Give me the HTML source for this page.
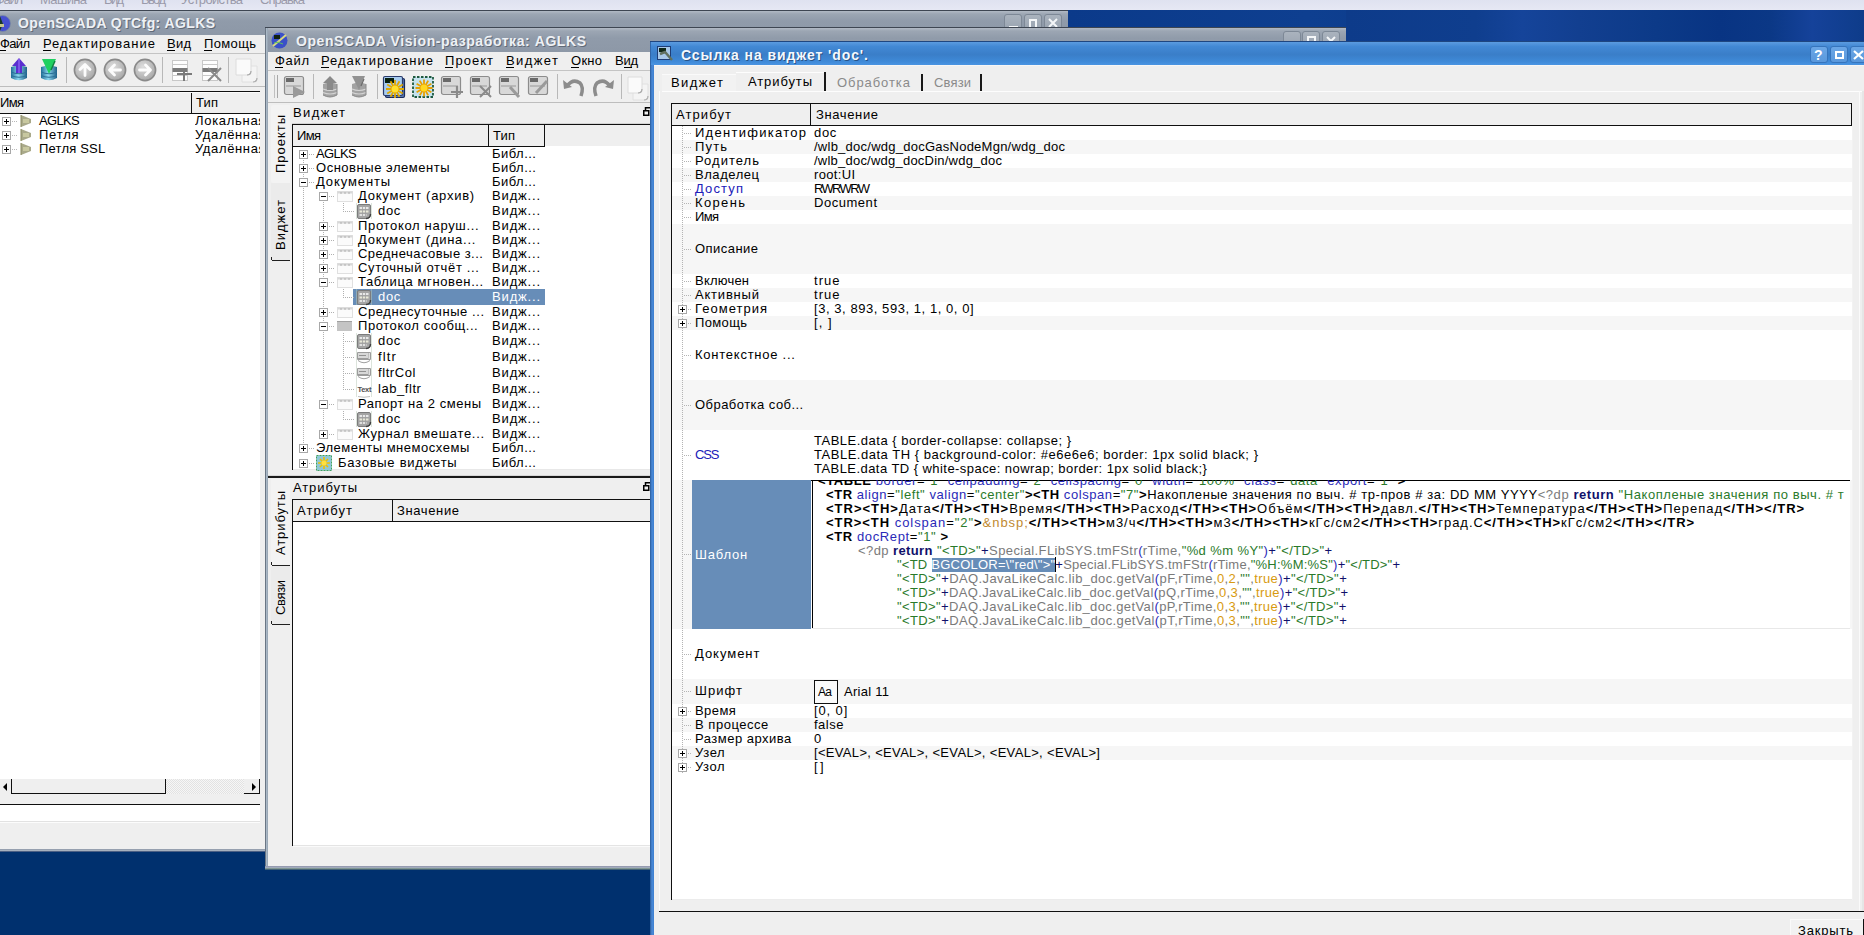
<!DOCTYPE html><html><head><meta charset="utf-8"><style>
html,body{margin:0;padding:0}
body{width:1864px;height:935px;overflow:hidden;position:relative;background:#00306e;font-family:"Liberation Sans",sans-serif;font-size:13px;color:#000}
body>div,div.a{position:absolute}
.t{position:absolute;white-space:pre;line-height:14px}
svg{position:absolute;overflow:visible}
</style></head><body>
<div style="left:0px;top:0px;width:1864px;height:935px;background:#00306e"></div>
<div style="left:1068px;top:10px;width:796px;height:32px;background:linear-gradient(90deg,#0b3a8a 0%,#0e3f90 30%,#0b3a88 60%,#073583 75%,#0b3a86 100%)"></div>
<div style="left:1346px;top:10px;width:518px;height:32px;background:linear-gradient(90deg,#0d3b8a 0%,#0f3e8e 25%,#15449a 34%,#123f90 45%,#0c3a88 60%,#083483 72%,#0b3886 82%,#15429a 90%,#0e3c8a 100%)"></div>
<div style="left:0px;top:0px;width:1864px;height:10px;background:linear-gradient(#dfe2f0,#e6e8f4)"></div>
<div class="t" style="left:-5px;top:-7px;font-size:13px;letter-spacing:-1.320px;color:#9a9aaa;">Файл</div>
<div class="t" style="left:40px;top:-7px;font-size:13px;letter-spacing:-0.661px;color:#9a9aaa;">Машина</div>
<div class="t" style="left:104px;top:-7px;font-size:13px;letter-spacing:-1.759px;color:#9a9aaa;">Вид</div>
<div class="t" style="left:141px;top:-7px;font-size:13px;letter-spacing:-1.654px;color:#9a9aaa;">Ввод</div>
<div class="t" style="left:181px;top:-7px;font-size:13px;letter-spacing:-0.668px;color:#9a9aaa;">Устройства</div>
<div class="t" style="left:260px;top:-7px;font-size:13px;letter-spacing:-1.000px;color:#9a9aaa;">Справка</div>
<div style="left:0px;top:10px;width:1068px;height:841px;background:#efefef"></div>
<div style="left:0px;top:10px;width:1068px;height:1px;background:#3e4652"></div>
<div style="left:0px;top:11px;width:1068px;height:24px;background:linear-gradient(#b2bac5 0px,#9ca6b3 3px,#909baa 10px,#8d98a7)"></div>
<svg style="left:-6px;top:15px" width="17" height="17" viewBox="0 0 17 17"><circle cx="8.5" cy="8.5" r="8" fill="#4650d0"/><path d="M0.5 8.5 A8 8 0 0 1 6 1 L9 9 L6 16 A8 8 0 0 1 0.5 8.5 Z" fill="#1a3a28"/><rect x="2" y="9" width="8" height="3" fill="#c8c890"/><circle cx="8.5" cy="8.5" r="8" fill="none" stroke="#7a8aa0" stroke-width=".8"/></svg>
<div class="t" style="left:19px;top:17px;font-size:14px;letter-spacing:0.394px;color:#3c4450;font-weight:bold;opacity:.55;">OpenSCADA QTCfg: AGLKS</div>
<div class="t" style="left:18px;top:16px;font-size:14px;letter-spacing:0.394px;color:#eef1f5;font-weight:bold;">OpenSCADA QTCfg: AGLKS</div>
<div style="left:1004px;top:14px;width:18px;height:16px;border:1px solid #7d8896;border-radius:3px;box-sizing:border-box;background:linear-gradient(#aab3be,#9aa4b1)"></div>
<div style="left:1024px;top:14px;width:18px;height:16px;border:1px solid #7d8896;border-radius:3px;box-sizing:border-box;background:linear-gradient(#aab3be,#9aa4b1)"></div>
<div style="left:1044px;top:14px;width:18px;height:16px;border:1px solid #7d8896;border-radius:3px;box-sizing:border-box;background:linear-gradient(#aab3be,#9aa4b1)"></div>
<div style="left:1009px;top:26px;width:9px;height:2px;background:#f4f6f8"></div>
<div style="left:1029px;top:19px;width:8px;height:9px;border:2px solid #f4f6f8;border-bottom:none;box-sizing:border-box"></div>
<svg style="left:1048px;top:18px" width="10" height="10"><path d="M1 1 L9 9 M9 1 L1 9" stroke="#f4f6f8" stroke-width="2"/></svg>
<div style="left:0px;top:35px;width:1068px;height:18px;background:#efefef"></div>
<div class="t" style="left:0px;top:37px;font-size:13px;letter-spacing:-0.654px;">Файл</div>
<div style="left:0px;top:50px;width:6px;height:1px;background:#000"></div>
<div class="t" style="left:43px;top:37px;font-size:13px;letter-spacing:0.997px;">Редактирование</div>
<div style="left:43px;top:50px;width:8px;height:1px;background:#000"></div>
<div class="t" style="left:167px;top:37px;font-size:13px;letter-spacing:0.241px;">Вид</div>
<div style="left:167px;top:50px;width:8px;height:1px;background:#000"></div>
<div class="t" style="left:204px;top:37px;font-size:13px;letter-spacing:0.358px;">Помощь</div>
<div style="left:204px;top:50px;width:8px;height:1px;background:#000"></div>
<div style="left:0px;top:53px;width:1068px;height:1px;background:#c4c4c4"></div>
<div style="left:0px;top:86px;width:1068px;height:1px;background:#bdbdbd"></div>
<svg style="left:10px;top:58px" width="18" height="24" viewBox="0 0 18 24"><defs><linearGradient id="dbg" x1="0" x2="1"><stop offset="0" stop-color="#1f6f98"/><stop offset=".45" stop-color="#8fd8f0"/><stop offset="1" stop-color="#1d5f88"/></linearGradient></defs><path d="M1 9 Q9 6 17 9 L17 20 Q9 24.5 1 20 Z" fill="url(#dbg)"/><path d="M1 14 Q9 17.5 17 14 M1 17.5 Q9 21 17 17.5" stroke="#2a6f98" fill="none" stroke-width="1"/><path d="M9 0 L16 8 L12 8 L12 15 L6 15 L6 8 L2 8 Z" fill="#5a2ed0"/><path d="M9 1 L9 15" stroke="#8a60f0" stroke-width="1.5"/></svg>
<svg style="left:40px;top:58px" width="18" height="24" viewBox="0 0 18 24"><defs><linearGradient id="dbg" x1="0" x2="1"><stop offset="0" stop-color="#1f6f98"/><stop offset=".45" stop-color="#8fd8f0"/><stop offset="1" stop-color="#1d5f88"/></linearGradient></defs><path d="M1 9 Q9 6 17 9 L17 20 Q9 24.5 1 20 Z" fill="url(#dbg)"/><path d="M1 14 Q9 17.5 17 14 M1 17.5 Q9 21 17 17.5" stroke="#2a6f98" fill="none" stroke-width="1"/><path d="M2 1 L16 1 L9 16 Z" fill="#20d060"/><path d="M11 12 L15 3" stroke="#108040" stroke-width="1.5"/></svg>
<div style="left:66px;top:57px;width:1px;height:26px;background:#b8b8b8"></div>
<svg style="left:73px;top:58px" width="24" height="24" viewBox="0 0 24 24"><defs><radialGradient id="cg" cx=".4" cy=".35" r=".7"><stop offset="0" stop-color="#dedede"/><stop offset="1" stop-color="#a6a6a6"/></radialGradient></defs><circle cx="12" cy="12" r="10.6" fill="url(#cg)" stroke="#8a8a8a" stroke-width="1.6"/><path d="M12 17.5 L12 7 M7 11.5 L12 6.5 L17 11.5" stroke="#fcfcfc" stroke-width="2.8" fill="none" stroke-linecap="round" stroke-linejoin="round"/></svg>
<svg style="left:103px;top:58px" width="24" height="24" viewBox="0 0 24 24"><defs><radialGradient id="cg" cx=".4" cy=".35" r=".7"><stop offset="0" stop-color="#dedede"/><stop offset="1" stop-color="#a6a6a6"/></radialGradient></defs><circle cx="12" cy="12" r="10.6" fill="url(#cg)" stroke="#8a8a8a" stroke-width="1.6"/><path d="M17.5 12 L7 12 M11.5 7 L6.5 12 L11.5 17" stroke="#fcfcfc" stroke-width="2.8" fill="none" stroke-linecap="round" stroke-linejoin="round"/></svg>
<svg style="left:133px;top:58px" width="24" height="24" viewBox="0 0 24 24"><defs><radialGradient id="cg" cx=".4" cy=".35" r=".7"><stop offset="0" stop-color="#dedede"/><stop offset="1" stop-color="#a6a6a6"/></radialGradient></defs><circle cx="12" cy="12" r="10.6" fill="url(#cg)" stroke="#8a8a8a" stroke-width="1.6"/><path d="M6.5 12 L17 12 M12.5 7 L17.5 12 L12.5 17" stroke="#fcfcfc" stroke-width="2.8" fill="none" stroke-linecap="round" stroke-linejoin="round"/></svg>
<div style="left:162px;top:57px;width:1px;height:26px;background:#b8b8b8"></div>
<svg style="left:172px;top:60px" width="22" height="22" viewBox="0 0 22 22"><rect x="0.5" y="0.5" width="15" height="20" fill="#fdfdfd" stroke="#c8c8c8"/><rect x="0.5" y="4" width="15" height="1" fill="#c8c8c8"/><rect x="0.5" y="8" width="15" height="4" fill="#7a7a7a"/><rect x="0.5" y="15" width="15" height="1" fill="#c8c8c8"/><path d="M12 9 L12 21 M5 14 L20 14" stroke="#7a7a7a" stroke-width="2"/></svg>
<svg style="left:202px;top:60px" width="22" height="22" viewBox="0 0 22 22"><rect x="0.5" y="0.5" width="15" height="20" fill="#fdfdfd" stroke="#c8c8c8"/><rect x="0.5" y="4" width="15" height="1" fill="#c8c8c8"/><rect x="0.5" y="8" width="15" height="4" fill="#7a7a7a"/><rect x="0.5" y="15" width="15" height="1" fill="#c8c8c8"/><path d="M6 8 L19 21 M19 8 L6 21" stroke="#8a8a8a" stroke-width="2"/></svg>
<div style="left:228px;top:57px;width:1px;height:26px;background:#b8b8b8"></div>
<svg style="left:235px;top:58px" width="24" height="26" viewBox="0 0 24 26"><path d="M7 8 L22 8 L22 20 Q22 24 18 24 L7 24 Z" fill="#f4f4f4" stroke="#e0e0e0"/><path d="M18 24 Q22 24 22 20" stroke="#b0b0b0" fill="none" stroke-width="1.2"/><path d="M1 1 L16 1 L16 13 Q16 17 12 17 L1 17 Z" fill="#fafafa" stroke="#dcdcdc"/><path d="M12 17 Q16 17 16 13" stroke="#a8a8a8" fill="none" stroke-width="1.2"/></svg>
<div style="left:0px;top:92px;width:260px;height:21px;background:#efefef"></div>
<div style="left:0px;top:91px;width:260px;height:1px;background:#101010"></div>
<div style="left:0px;top:92px;width:260px;height:1px;background:#fcfcfc"></div>
<div style="left:0px;top:113px;width:260px;height:1px;background:#101010"></div>
<div style="left:191px;top:93px;width:1px;height:20px;background:#101010"></div>
<div class="t" style="left:0px;top:96px;font-size:13px;letter-spacing:-0.660px;">Имя</div>
<div class="t" style="left:196px;top:96px;font-size:13px;letter-spacing:0.164px;">Тип</div>
<div style="left:0px;top:114px;width:260px;height:665px;background:#fff"></div>
<div style="left:260px;top:91px;width:5px;height:760px;background:#efefef"></div>
<div style="left:2px;top:117px;width:9px;height:9px;border:1px solid #a8a8a8;box-sizing:border-box;background:#fff"></div>
<div style="left:4px;top:121px;width:5px;height:1px;background:#000"></div>
<div style="left:6px;top:119px;width:1px;height:5px;background:#000"></div>
<svg style="left:19px;top:114px" width="14" height="14" viewBox="0 0 14 14"><path d="M2 1 L12 5 L12 9 L2 13 Z" fill="#a9a98a"/><path d="M2 1 L2 13" stroke="#8a8a60"/><rect x="4" y="5" width="6" height="4" fill="#c8c8a0"/></svg>
<div style="left:12px;top:121px;width:6px;height:1px;background:repeating-linear-gradient(90deg,#b8b8b8 0 1px,transparent 1px 2px)"></div>
<div class="t" style="left:39px;top:114px;font-size:13px;letter-spacing:-0.643px;">AGLKS</div>
<div class="t" style="left:195px;top:114px;width:65px;overflow:hidden;letter-spacing:0.703px">Локальная</div>
<div style="left:2px;top:131px;width:9px;height:9px;border:1px solid #a8a8a8;box-sizing:border-box;background:#fff"></div>
<div style="left:4px;top:135px;width:5px;height:1px;background:#000"></div>
<div style="left:6px;top:133px;width:1px;height:5px;background:#000"></div>
<svg style="left:19px;top:128px" width="14" height="14" viewBox="0 0 14 14"><path d="M2 1 L12 5 L12 9 L2 13 Z" fill="#a9a98a"/><path d="M2 1 L2 13" stroke="#8a8a60"/><rect x="4" y="5" width="6" height="4" fill="#c8c8a0"/></svg>
<div style="left:12px;top:135px;width:6px;height:1px;background:repeating-linear-gradient(90deg,#b8b8b8 0 1px,transparent 1px 2px)"></div>
<div class="t" style="left:39px;top:128px;font-size:13px;letter-spacing:0.781px;">Петля</div>
<div class="t" style="left:195px;top:128px;width:65px;overflow:hidden;letter-spacing:0.632px">Удалённая</div>
<div style="left:2px;top:145px;width:9px;height:9px;border:1px solid #a8a8a8;box-sizing:border-box;background:#fff"></div>
<div style="left:4px;top:149px;width:5px;height:1px;background:#000"></div>
<div style="left:6px;top:147px;width:1px;height:5px;background:#000"></div>
<svg style="left:19px;top:142px" width="14" height="14" viewBox="0 0 14 14"><path d="M2 1 L12 5 L12 9 L2 13 Z" fill="#a9a98a"/><path d="M2 1 L2 13" stroke="#8a8a60"/><rect x="4" y="5" width="6" height="4" fill="#c8c8a0"/></svg>
<div style="left:12px;top:149px;width:6px;height:1px;background:repeating-linear-gradient(90deg,#b8b8b8 0 1px,transparent 1px 2px)"></div>
<div class="t" style="left:39px;top:142px;font-size:13px;letter-spacing:0.191px;">Петля SSL</div>
<div class="t" style="left:195px;top:142px;width:65px;overflow:hidden;letter-spacing:0.632px">Удалённая</div>
<div style="left:0px;top:779px;width:260px;height:16px;background:#efefef"></div>
<div style="left:166px;top:779px;width:78px;height:15px;background:repeating-conic-gradient(#e2e2e2 0 25%,#f6f6f6 0 50%) 0 0/2px 2px"></div>
<div style="left:11px;top:779px;width:1px;height:15px;background:#101010"></div>
<div style="left:11px;top:793px;width:155px;height:1px;background:#101010"></div>
<div style="left:165px;top:779px;width:1px;height:15px;background:#101010"></div>
<div style="left:244px;top:793px;width:16px;height:1px;background:#101010"></div>
<div style="left:259px;top:779px;width:1px;height:15px;background:#101010"></div>
<svg style="left:1px;top:782px" width="8" height="10"><path d="M2 5 L6 1 L6 9 Z" fill="#000"/></svg>
<svg style="left:250px;top:782px" width="8" height="10"><path d="M6 5 L2 1 L2 9 Z" fill="#000"/></svg>
<div style="left:0px;top:795px;width:260px;height:9px;background:#efefef"></div>
<div style="left:0px;top:804px;width:260px;height:1px;background:#101010"></div>
<div style="left:0px;top:805px;width:260px;height:17px;background:#fff"></div>
<div style="left:0px;top:821px;width:260px;height:1px;background:#e2e2e2"></div>
<div style="left:0px;top:822px;width:260px;height:1px;background:#fcfcfc"></div>
<div style="left:0px;top:849px;width:265px;height:3px;background:linear-gradient(#8e98a8,#a6b0be 50%,#1e3868)"></div>
<div style="left:265px;top:27px;width:1081px;height:842px;background:#efefef"></div>
<div style="left:265px;top:27px;width:3px;height:842px;background:linear-gradient(90deg,#6a7684 0 1px,#aab8c6 1px 2px,#9aa8b6 2px 3px)"></div>
<div style="left:265px;top:27px;width:1081px;height:1px;background:#3e4652"></div>
<div style="left:268px;top:28px;width:1078px;height:24px;background:linear-gradient(#b2bac5 0px,#9ca6b3 3px,#909baa 10px,#8d98a7)"></div>
<svg style="left:271px;top:32px" width="17" height="17" viewBox="0 0 17 17"><circle cx="8.5" cy="8.5" r="8" fill="#3a50c8"/><rect x="3" y="3" width="6" height="4" fill="#102010"/><path d="M2 14 L15 3" stroke="#d8d880" stroke-width="2"/><path d="M3 11 Q7 9 12 12" stroke="#60c060" fill="none"/></svg>
<div class="t" style="left:297px;top:35px;font-size:14px;letter-spacing:0.569px;color:#3c4450;font-weight:bold;opacity:.55;">OpenSCADA Vision-разработка: AGLKS</div>
<div class="t" style="left:296px;top:34px;font-size:14px;letter-spacing:0.569px;color:#eef1f5;font-weight:bold;">OpenSCADA Vision-разработка: AGLKS</div>
<div style="left:1283px;top:31px;width:18px;height:16px;border:1px solid #7d8896;border-radius:3px;box-sizing:border-box;background:linear-gradient(#aab3be,#9aa4b1)"></div>
<div style="left:1302px;top:31px;width:18px;height:16px;border:1px solid #7d8896;border-radius:3px;box-sizing:border-box;background:linear-gradient(#aab3be,#9aa4b1)"></div>
<div style="left:1322px;top:31px;width:18px;height:16px;border:1px solid #7d8896;border-radius:3px;box-sizing:border-box;background:linear-gradient(#aab3be,#9aa4b1)"></div>
<div style="left:1307px;top:36px;width:9px;height:9px;border:2px solid #f4f6f8;border-bottom:none;box-sizing:border-box"></div>
<svg style="left:1326px;top:36px" width="10" height="10"><path d="M1 1 L9 9 M9 1 L1 9" stroke="#f4f6f8" stroke-width="2"/></svg>
<div class="t" style="left:275px;top:54px;font-size:13px;letter-spacing:0.680px;">Файл</div>
<div style="left:275px;top:67px;width:8px;height:1px;background:#000"></div>
<div class="t" style="left:321px;top:54px;font-size:13px;letter-spacing:0.997px;">Редактирование</div>
<div style="left:321px;top:67px;width:8px;height:1px;background:#000"></div>
<div class="t" style="left:445px;top:54px;font-size:13px;letter-spacing:1.035px;">Проект</div>
<div style="left:445px;top:67px;width:8px;height:1px;background:#000"></div>
<div class="t" style="left:506px;top:54px;font-size:13px;letter-spacing:1.406px;">Виджет</div>
<div style="left:506px;top:67px;width:8px;height:1px;background:#000"></div>
<div class="t" style="left:571px;top:54px;font-size:13px;letter-spacing:0.264px;">Окно</div>
<div style="left:571px;top:67px;width:8px;height:1px;background:#000"></div>
<div class="t" style="left:615px;top:54px;font-size:13px;letter-spacing:-0.259px;">Вид</div>
<div style="left:624px;top:67px;width:8px;height:1px;background:#000"></div>
<div style="left:268px;top:70px;width:1078px;height:1px;background:#c4c4c4"></div>
<div style="left:268px;top:102px;width:1078px;height:1px;background:#bdbdbd"></div>
<div style="left:274px;top:75px;width:1px;height:23px;background:#c0c0c0"></div>
<div style="left:277px;top:75px;width:1px;height:23px;background:#a8a8a8"></div>
<svg style="left:284px;top:76px" width="23" height="23" viewBox="0 0 23 23"><rect x="0.5" y="0.5" width="19" height="18" rx="2" fill="#d8d8d8" stroke="#8c8c8c" stroke-width="1.2"/><rect x="2" y="2" width="8" height="4" fill="#6a6a6a"/><rect x="2" y="9" width="15" height="2" fill="#b8b8b8"/><path d="M9 10 L21 16 L9 22 Z" fill="#9a9a9a"/></svg>
<div style="left:313px;top:74px;width:1px;height:25px;background:#b8b8b8"></div>
<svg style="left:322px;top:76px" width="16" height="23" viewBox="0 0 16 23"><path d="M1 8 Q8 5 15 8 L15 19 Q8 23 1 19 Z" fill="#a2a2a2"/><path d="M1 13 Q8 16 15 13 M1 16.5 Q8 19.5 15 16.5" stroke="#d4d4d4" fill="none" stroke-width="1.2"/><path d="M15 8 L15 19 Q8 23 1 19" stroke="#8a8a8a" fill="none"/><path d="M8 0 L15 7 L11 7 L11 14 L5 14 L5 7 L1 7 Z" fill="#8a8a8a"/></svg>
<svg style="left:351px;top:76px" width="16" height="23" viewBox="0 0 16 23"><path d="M1 8 Q8 5 15 8 L15 19 Q8 23 1 19 Z" fill="#a2a2a2"/><path d="M1 13 Q8 16 15 13 M1 16.5 Q8 19.5 15 16.5" stroke="#d4d4d4" fill="none" stroke-width="1.2"/><path d="M15 8 L15 19 Q8 23 1 19" stroke="#8a8a8a" fill="none"/><path d="M1 0 L14 0 L8 14 Z" fill="#929292"/><path d="M10 10 L13 3" stroke="#6a6a6a" stroke-width="1.2"/></svg>
<div style="left:377px;top:74px;width:1px;height:25px;background:#b8b8b8"></div>
<svg style="left:383px;top:76px" width="23" height="23" viewBox="0 0 23 23"><rect x="2.5" y="2.5" width="19" height="19" rx="1.5" fill="#5a78b0" stroke="#1c2c5c" stroke-width="1.2"/><rect x="0.5" y="0.5" width="19" height="19" rx="1.5" fill="#a8ccf0" stroke="#2a3a6a" stroke-width="1.2"/><rect x="2" y="2" width="9" height="5" fill="#082010"/><path d="M12.0 13.0 L21.0 13.0 M12.0 13.0 L19.8 17.5 M12.0 13.0 L16.5 20.8 M12.0 13.0 L12.0 22.0 M12.0 13.0 L7.5 20.8 M12.0 13.0 L4.2 17.5 M12.0 13.0 L3.0 13.0 M12.0 13.0 L4.2 8.5 M12.0 13.0 L7.5 5.2 M12.0 13.0 L12.0 4.0 M12.0 13.0 L16.5 5.2 M12.0 13.0 L19.8 8.5 " stroke="#e0a800" stroke-width="1.8"/><circle cx="12" cy="13" r="3.5" fill="#ffe030"/></svg>
<svg style="left:412px;top:76px" width="23" height="23" viewBox="0 0 23 23"><rect x="1" y="1" width="20" height="20" fill="#c4e2ee" stroke="#1e5a40" stroke-width="1.8" stroke-dasharray="2.5 1.5"/><path d="M12.0 12.0 L20.5 12.0 M12.0 12.0 L19.4 16.2 M12.0 12.0 L16.2 19.4 M12.0 12.0 L12.0 20.5 M12.0 12.0 L7.8 19.4 M12.0 12.0 L4.6 16.2 M12.0 12.0 L3.5 12.0 M12.0 12.0 L4.6 7.8 M12.0 12.0 L7.7 4.6 M12.0 12.0 L12.0 3.5 M12.0 12.0 L16.2 4.6 M12.0 12.0 L19.4 7.7 " stroke="#e8a000" stroke-width="1.8"/><circle cx="12" cy="12" r="3.5" fill="#ffd820"/></svg>
<svg style="left:441px;top:76px" width="23" height="23" viewBox="0 0 23 23"><rect x="0.5" y="0.5" width="19" height="18" rx="2" fill="#d8d8d8" stroke="#8c8c8c" stroke-width="1.2"/><rect x="2" y="2" width="8" height="4" fill="#6a6a6a"/><rect x="2" y="9" width="15" height="2" fill="#b8b8b8"/><path d="M16 10 L16 22 M10 16 L22 16" stroke="#8a8a8a" stroke-width="2.2"/></svg>
<svg style="left:470px;top:76px" width="23" height="23" viewBox="0 0 23 23"><rect x="0.5" y="0.5" width="19" height="18" rx="2" fill="#d8d8d8" stroke="#8c8c8c" stroke-width="1.2"/><rect x="2" y="2" width="8" height="4" fill="#6a6a6a"/><rect x="2" y="9" width="15" height="2" fill="#b8b8b8"/><path d="M10 10 L21 21 M21 10 L10 21" stroke="#8a8a8a" stroke-width="2"/></svg>
<svg style="left:499px;top:76px" width="23" height="23" viewBox="0 0 23 23"><rect x="0.5" y="0.5" width="19" height="18" rx="2" fill="#d8d8d8" stroke="#8c8c8c" stroke-width="1.2"/><rect x="2" y="2" width="8" height="4" fill="#6a6a6a"/><rect x="2" y="9" width="15" height="2" fill="#b8b8b8"/><path d="M11 11 L20 21" stroke="#9a9a9a" stroke-width="3"/></svg>
<svg style="left:528px;top:76px" width="23" height="23" viewBox="0 0 23 23"><rect x="0.5" y="0.5" width="19" height="18" rx="2" fill="#d8d8d8" stroke="#8c8c8c" stroke-width="1.2"/><rect x="2" y="2" width="8" height="4" fill="#6a6a6a"/><rect x="2" y="9" width="15" height="2" fill="#b8b8b8"/><path d="M8 17 L19 5" stroke="#9a9a9a" stroke-width="3"/></svg>
<div style="left:557px;top:74px;width:1px;height:25px;background:#b8b8b8"></div>
<svg style="left:563px;top:77px" width="22" height="20" viewBox="0 0 22 20"><path d="M4 9 Q10 1 17 6 Q21 10 18 19" stroke="#8c8c8c" stroke-width="3.5" fill="none"/><path d="M0 3 L9 10 L1 12 Z" fill="#8c8c8c"/></svg>
<svg style="left:592px;top:77px" width="22" height="20" viewBox="0 0 22 20"><path d="M18 9 Q12 1 5 6 Q1 10 4 19" stroke="#8c8c8c" stroke-width="3.5" fill="none"/><path d="M22 3 L13 10 L21 12 Z" fill="#8c8c8c"/></svg>
<div style="left:621px;top:74px;width:1px;height:25px;background:#b8b8b8"></div>
<svg style="left:627px;top:76px" width="24" height="26" viewBox="0 0 24 26"><path d="M6 8 L21 8 L21 20 Q21 24 17 24 L6 24 Z" fill="#f4f4f4" stroke="#e0e0e0"/><path d="M17 24 Q21 24 21 20" stroke="#b0b0b0" fill="none" stroke-width="1.2"/><path d="M1 1 L15 1 L15 13 Q15 17 11 17 L1 17 Z" fill="#fafafa" stroke="#dcdcdc"/><path d="M11 17 Q15 17 15 13" stroke="#a8a8a8" fill="none" stroke-width="1.2"/></svg>
<div class="t" style="left:293px;top:106px;font-size:13px;letter-spacing:1.406px;">Виджет</div>
<svg style="left:643px;top:107px" width="8" height="9"><rect x="0.75" y="3.75" width="5" height="4.5" fill="none" stroke="#000" stroke-width="1.5"/><path d="M2.5 3.5 L2.5 0.75 L7.5 0.75" fill="none" stroke="#000" stroke-width="1.5"/></svg>
<div style="left:271px;top:105px;width:19px;height:78px;background:#f3f3f3;border-radius:2px 0 0 2px"></div>
<div style="left:271px;top:183px;width:19px;height:78px;background:#ebebeb"></div>
<div style="left:272px;top:260px;width:18px;height:1px;background:#202020"></div>
<div style="left:271px;top:257px;width:1px;height:3px;background:#202020"></div>
<div class="t" style="left:274px;top:173px;transform-origin:0 0;transform:rotate(-90deg);letter-spacing:0.972px">Проекты</div>
<div class="t" style="left:274px;top:250px;transform-origin:0 0;transform:rotate(-90deg);letter-spacing:1.006px">Виджет</div>
<div style="left:292px;top:124px;width:358px;height:346px;background:#fff"></div>
<div style="left:292px;top:124px;width:358px;height:22px;background:#efefef"></div>
<div style="left:292px;top:123px;width:358px;height:1px;background:#d4d4d4"></div>
<div style="left:292px;top:124px;width:358px;height:1px;background:#101010"></div>
<div style="left:292px;top:124px;width:1px;height:346px;background:#101010"></div>
<div style="left:292px;top:146px;width:253px;height:1px;background:#101010"></div>
<div style="left:488px;top:125px;width:1px;height:21px;background:#101010"></div>
<div style="left:544px;top:125px;width:1px;height:21px;background:#101010"></div>
<div class="t" style="left:297px;top:129px;font-size:13px;letter-spacing:-0.660px;">Имя</div>
<div class="t" style="left:493px;top:129px;font-size:13px;letter-spacing:0.164px;">Тип</div>
<div style="left:293px;top:469px;width:357px;height:1px;background:#e8e8e8"></div>
<div style="left:353px;top:289px;width:192px;height:16px;background:#678db8"></div>
<div style="left:303px;top:160px;width:1px;height:288px;background:repeating-linear-gradient(#b0b0b0 0 1px,transparent 1px 2px)"></div>
<div style="left:323px;top:202px;width:1px;height:232px;background:repeating-linear-gradient(#b0b0b0 0 1px,transparent 1px 2px)"></div>
<div style="left:343px;top:203px;width:1px;height:8px;background:repeating-linear-gradient(#b0b0b0 0 1px,transparent 1px 2px)"></div>
<div style="left:343px;top:289px;width:1px;height:8px;background:repeating-linear-gradient(#b0b0b0 0 1px,transparent 1px 2px)"></div>
<div style="left:343px;top:333px;width:1px;height:56px;background:repeating-linear-gradient(#b0b0b0 0 1px,transparent 1px 2px)"></div>
<div style="left:343px;top:411px;width:1px;height:8px;background:repeating-linear-gradient(#b0b0b0 0 1px,transparent 1px 2px)"></div>
<div style="left:299px;top:150px;width:9px;height:9px;border:1px solid #a8a8a8;box-sizing:border-box;background:#fff"></div>
<div style="left:301px;top:154px;width:5px;height:1px;background:#000"></div>
<div style="left:303px;top:152px;width:1px;height:5px;background:#000"></div>
<div style="left:309px;top:154px;width:5px;height:1px;background:repeating-linear-gradient(90deg,#b0b0b0 0 1px,transparent 1px 2px)"></div>
<div class="t" style="left:316px;top:147px;font-size:13px;letter-spacing:-0.643px;">AGLKS</div>
<div class="t" style="left:492px;top:147px;font-size:13px;letter-spacing:0.481px;">Библ...</div>
<div style="left:299px;top:164px;width:9px;height:9px;border:1px solid #a8a8a8;box-sizing:border-box;background:#fff"></div>
<div style="left:301px;top:168px;width:5px;height:1px;background:#000"></div>
<div style="left:303px;top:166px;width:1px;height:5px;background:#000"></div>
<div style="left:309px;top:168px;width:5px;height:1px;background:repeating-linear-gradient(90deg,#b0b0b0 0 1px,transparent 1px 2px)"></div>
<div class="t" style="left:316px;top:161px;font-size:13px;letter-spacing:0.526px;">Основные элементы</div>
<div class="t" style="left:492px;top:161px;font-size:13px;letter-spacing:0.481px;">Библ...</div>
<div style="left:299px;top:178px;width:9px;height:9px;border:1px solid #a8a8a8;box-sizing:border-box;background:#fff"></div>
<div style="left:301px;top:182px;width:5px;height:1px;background:#000"></div>
<div style="left:309px;top:182px;width:5px;height:1px;background:repeating-linear-gradient(90deg,#b0b0b0 0 1px,transparent 1px 2px)"></div>
<div class="t" style="left:316px;top:175px;font-size:13px;letter-spacing:0.899px;">Документы</div>
<div class="t" style="left:492px;top:175px;font-size:13px;letter-spacing:0.481px;">Библ...</div>
<div style="left:319px;top:192px;width:9px;height:9px;border:1px solid #a8a8a8;box-sizing:border-box;background:#fff"></div>
<div style="left:321px;top:196px;width:5px;height:1px;background:#000"></div>
<div style="left:329px;top:196px;width:6px;height:1px;background:repeating-linear-gradient(90deg,#b0b0b0 0 1px,transparent 1px 2px)"></div>
<svg style="left:337px;top:191px" width="16" height="11"><rect x="0.5" y="0.5" width="15" height="10" fill="#fbfbfb" stroke="#e0e0e0"/><rect x="0.5" y="0.5" width="15" height="2" fill="#d8d8d8"/><path d="M4 1 V3 M8 1 V3 M12 1 V3" stroke="#b0b0b0"/></svg>
<div class="t" style="left:358px;top:189px;font-size:13px;letter-spacing:0.752px;">Документ (архив)</div>
<div class="t" style="left:492px;top:189px;font-size:13px;letter-spacing:0.847px;">Видж...</div>
<div style="left:343px;top:211px;width:12px;height:1px;background:repeating-linear-gradient(90deg,#b0b0b0 0 1px,transparent 1px 2px)"></div>
<svg style="left:356px;top:203px" width="16" height="17" viewBox="0 0 16 17"><path d="M0.5 0.5 V16.5 M15.5 0.5 V16.5" stroke="#b8c8b8" stroke-dasharray="1 1"/><path d="M3 1.5 L13 1.5 Q14.5 1.5 14.5 3 L14.5 11 Q14.5 15.5 10 15.5 L3 15.5 Q1.5 15.5 1.5 14 L1.5 3 Q1.5 1.5 3 1.5 Z" fill="#a4a4a4" stroke="#7c7c7c"/><rect x="3.5" y="4" width="9" height="2" fill="#e8e8e8"/><rect x="3.5" y="7.5" width="9" height="2" fill="#e8e8d8"/><rect x="3.5" y="11" width="7" height="2" fill="#e0e0e0"/><path d="M6.5 4 V13 M9.5 4 V13" stroke="#a0a0a0" stroke-width=".8"/><path d="M10 15.5 Q14.5 15.5 14.5 11" stroke="#404040" fill="none" stroke-width="1.4"/></svg>
<div class="t" style="left:378px;top:204px;font-size:13px;letter-spacing:0.657px;">doc</div>
<div class="t" style="left:492px;top:204px;font-size:13px;letter-spacing:0.847px;">Видж...</div>
<div style="left:319px;top:222px;width:9px;height:9px;border:1px solid #a8a8a8;box-sizing:border-box;background:#fff"></div>
<div style="left:321px;top:226px;width:5px;height:1px;background:#000"></div>
<div style="left:323px;top:224px;width:1px;height:5px;background:#000"></div>
<div style="left:329px;top:226px;width:6px;height:1px;background:repeating-linear-gradient(90deg,#b0b0b0 0 1px,transparent 1px 2px)"></div>
<svg style="left:337px;top:221px" width="16" height="11"><rect x="0.5" y="0.5" width="15" height="10" fill="#fbfbfb" stroke="#e0e0e0"/><rect x="0.5" y="0.5" width="15" height="2" fill="#d8d8d8"/><path d="M4 1 V3 M8 1 V3 M12 1 V3" stroke="#b0b0b0"/></svg>
<div class="t" style="left:358px;top:219px;font-size:13px;letter-spacing:0.677px;">Протокол наруш...</div>
<div class="t" style="left:492px;top:219px;font-size:13px;letter-spacing:0.847px;">Видж...</div>
<div style="left:319px;top:236px;width:9px;height:9px;border:1px solid #a8a8a8;box-sizing:border-box;background:#fff"></div>
<div style="left:321px;top:240px;width:5px;height:1px;background:#000"></div>
<div style="left:323px;top:238px;width:1px;height:5px;background:#000"></div>
<div style="left:329px;top:240px;width:6px;height:1px;background:repeating-linear-gradient(90deg,#b0b0b0 0 1px,transparent 1px 2px)"></div>
<svg style="left:337px;top:235px" width="16" height="11"><rect x="0.5" y="0.5" width="15" height="10" fill="#fbfbfb" stroke="#e0e0e0"/><rect x="0.5" y="0.5" width="15" height="2" fill="#d8d8d8"/><path d="M4 1 V3 M8 1 V3 M12 1 V3" stroke="#b0b0b0"/></svg>
<div class="t" style="left:358px;top:233px;font-size:13px;letter-spacing:0.729px;">Документ (дина...</div>
<div class="t" style="left:492px;top:233px;font-size:13px;letter-spacing:0.847px;">Видж...</div>
<div style="left:319px;top:250px;width:9px;height:9px;border:1px solid #a8a8a8;box-sizing:border-box;background:#fff"></div>
<div style="left:321px;top:254px;width:5px;height:1px;background:#000"></div>
<div style="left:323px;top:252px;width:1px;height:5px;background:#000"></div>
<div style="left:329px;top:254px;width:6px;height:1px;background:repeating-linear-gradient(90deg,#b0b0b0 0 1px,transparent 1px 2px)"></div>
<svg style="left:337px;top:249px" width="16" height="11"><rect x="0.5" y="0.5" width="15" height="10" fill="#fbfbfb" stroke="#e0e0e0"/><rect x="0.5" y="0.5" width="15" height="2" fill="#d8d8d8"/><path d="M4 1 V3 M8 1 V3 M12 1 V3" stroke="#b0b0b0"/></svg>
<div class="t" style="left:358px;top:247px;font-size:13px;letter-spacing:0.470px;">Среднечасовые з...</div>
<div class="t" style="left:492px;top:247px;font-size:13px;letter-spacing:0.847px;">Видж...</div>
<div style="left:319px;top:264px;width:9px;height:9px;border:1px solid #a8a8a8;box-sizing:border-box;background:#fff"></div>
<div style="left:321px;top:268px;width:5px;height:1px;background:#000"></div>
<div style="left:323px;top:266px;width:1px;height:5px;background:#000"></div>
<div style="left:329px;top:268px;width:6px;height:1px;background:repeating-linear-gradient(90deg,#b0b0b0 0 1px,transparent 1px 2px)"></div>
<svg style="left:337px;top:263px" width="16" height="11"><rect x="0.5" y="0.5" width="15" height="10" fill="#fbfbfb" stroke="#e0e0e0"/><rect x="0.5" y="0.5" width="15" height="2" fill="#d8d8d8"/><path d="M4 1 V3 M8 1 V3 M12 1 V3" stroke="#b0b0b0"/></svg>
<div class="t" style="left:358px;top:261px;font-size:13px;letter-spacing:0.628px;">Суточный отчёт ...</div>
<div class="t" style="left:492px;top:261px;font-size:13px;letter-spacing:0.847px;">Видж...</div>
<div style="left:319px;top:278px;width:9px;height:9px;border:1px solid #a8a8a8;box-sizing:border-box;background:#fff"></div>
<div style="left:321px;top:282px;width:5px;height:1px;background:#000"></div>
<div style="left:329px;top:282px;width:6px;height:1px;background:repeating-linear-gradient(90deg,#b0b0b0 0 1px,transparent 1px 2px)"></div>
<svg style="left:337px;top:277px" width="16" height="11"><rect x="0.5" y="0.5" width="15" height="10" fill="#fbfbfb" stroke="#e0e0e0"/><rect x="0.5" y="0.5" width="15" height="2" fill="#d8d8d8"/><path d="M4 1 V3 M8 1 V3 M12 1 V3" stroke="#b0b0b0"/></svg>
<div class="t" style="left:358px;top:275px;font-size:13px;letter-spacing:0.620px;">Таблица мгновен...</div>
<div class="t" style="left:492px;top:275px;font-size:13px;letter-spacing:0.847px;">Видж...</div>
<div style="left:343px;top:297px;width:12px;height:1px;background:repeating-linear-gradient(90deg,#b0b0b0 0 1px,transparent 1px 2px)"></div>
<svg style="left:356px;top:289px" width="16" height="17" viewBox="0 0 16 17"><path d="M0.5 0.5 V16.5 M15.5 0.5 V16.5" stroke="#b8c8b8" stroke-dasharray="1 1"/><path d="M3 1.5 L13 1.5 Q14.5 1.5 14.5 3 L14.5 11 Q14.5 15.5 10 15.5 L3 15.5 Q1.5 15.5 1.5 14 L1.5 3 Q1.5 1.5 3 1.5 Z" fill="#a4a4a4" stroke="#7c7c7c"/><rect x="3.5" y="4" width="9" height="2" fill="#e8e8e8"/><rect x="3.5" y="7.5" width="9" height="2" fill="#e8e8d8"/><rect x="3.5" y="11" width="7" height="2" fill="#e0e0e0"/><path d="M6.5 4 V13 M9.5 4 V13" stroke="#a0a0a0" stroke-width=".8"/><path d="M10 15.5 Q14.5 15.5 14.5 11" stroke="#404040" fill="none" stroke-width="1.4"/></svg>
<div class="t" style="left:378px;top:290px;font-size:13px;letter-spacing:0.657px;color:#fff;">doc</div>
<div class="t" style="left:492px;top:290px;font-size:13px;letter-spacing:0.847px;color:#fff;">Видж...</div>
<div style="left:319px;top:308px;width:9px;height:9px;border:1px solid #a8a8a8;box-sizing:border-box;background:#fff"></div>
<div style="left:321px;top:312px;width:5px;height:1px;background:#000"></div>
<div style="left:323px;top:310px;width:1px;height:5px;background:#000"></div>
<div style="left:329px;top:312px;width:6px;height:1px;background:repeating-linear-gradient(90deg,#b0b0b0 0 1px,transparent 1px 2px)"></div>
<svg style="left:337px;top:307px" width="16" height="11"><rect x="0.5" y="0.5" width="15" height="10" fill="#fbfbfb" stroke="#e0e0e0"/><rect x="0.5" y="0.5" width="15" height="2" fill="#d8d8d8"/><path d="M4 1 V3 M8 1 V3 M12 1 V3" stroke="#b0b0b0"/></svg>
<div class="t" style="left:358px;top:305px;font-size:13px;letter-spacing:0.575px;">Среднесуточные ...</div>
<div class="t" style="left:492px;top:305px;font-size:13px;letter-spacing:0.847px;">Видж...</div>
<div style="left:319px;top:322px;width:9px;height:9px;border:1px solid #a8a8a8;box-sizing:border-box;background:#fff"></div>
<div style="left:321px;top:326px;width:5px;height:1px;background:#000"></div>
<div style="left:329px;top:326px;width:6px;height:1px;background:repeating-linear-gradient(90deg,#b0b0b0 0 1px,transparent 1px 2px)"></div>
<div style="left:337px;top:321px;width:15px;height:9px;background:#c4c4c4;border-top:1px solid #a0a0a0"></div>
<div class="t" style="left:358px;top:319px;font-size:13px;letter-spacing:0.566px;">Протокол сообщ...</div>
<div class="t" style="left:492px;top:319px;font-size:13px;letter-spacing:0.847px;">Видж...</div>
<div style="left:343px;top:341px;width:12px;height:1px;background:repeating-linear-gradient(90deg,#b0b0b0 0 1px,transparent 1px 2px)"></div>
<svg style="left:356px;top:333px" width="16" height="17" viewBox="0 0 16 17"><path d="M0.5 0.5 V16.5 M15.5 0.5 V16.5" stroke="#b8c8b8" stroke-dasharray="1 1"/><path d="M3 1.5 L13 1.5 Q14.5 1.5 14.5 3 L14.5 11 Q14.5 15.5 10 15.5 L3 15.5 Q1.5 15.5 1.5 14 L1.5 3 Q1.5 1.5 3 1.5 Z" fill="#a4a4a4" stroke="#7c7c7c"/><rect x="3.5" y="4" width="9" height="2" fill="#e8e8e8"/><rect x="3.5" y="7.5" width="9" height="2" fill="#e8e8d8"/><rect x="3.5" y="11" width="7" height="2" fill="#e0e0e0"/><path d="M6.5 4 V13 M9.5 4 V13" stroke="#a0a0a0" stroke-width=".8"/><path d="M10 15.5 Q14.5 15.5 14.5 11" stroke="#404040" fill="none" stroke-width="1.4"/></svg>
<div class="t" style="left:378px;top:334px;font-size:13px;letter-spacing:0.657px;">doc</div>
<div class="t" style="left:492px;top:334px;font-size:13px;letter-spacing:0.847px;">Видж...</div>
<div style="left:343px;top:357px;width:12px;height:1px;background:repeating-linear-gradient(90deg,#b0b0b0 0 1px,transparent 1px 2px)"></div>
<svg style="left:356px;top:349px" width="16" height="17" viewBox="0 0 16 17"><path d="M0.5 0.5 V16.5 M15.5 0.5 V16.5" stroke="#b8c8b8" stroke-dasharray="1 1"/><rect x="1" y="3" width="14" height="8" rx="1" fill="#9c9c9c"/><rect x="2" y="4" width="10" height="5" fill="#d8d8d8"/><path d="M3 6.5 H10" stroke="#808080" stroke-width=".8"/><rect x="12.5" y="4" width="1.5" height="6" fill="#e0e0e0"/><path d="M2 11.5 Q8 16 14 11.5" stroke="#a0a0a0" fill="none"/></svg>
<div class="t" style="left:378px;top:350px;font-size:13px;letter-spacing:1.110px;">fltr</div>
<div class="t" style="left:492px;top:350px;font-size:13px;letter-spacing:0.847px;">Видж...</div>
<div style="left:343px;top:373px;width:12px;height:1px;background:repeating-linear-gradient(90deg,#b0b0b0 0 1px,transparent 1px 2px)"></div>
<svg style="left:356px;top:365px" width="16" height="17" viewBox="0 0 16 17"><path d="M0.5 0.5 V16.5 M15.5 0.5 V16.5" stroke="#b8c8b8" stroke-dasharray="1 1"/><rect x="1" y="3" width="14" height="8" rx="1" fill="#9c9c9c"/><rect x="2" y="4" width="10" height="5" fill="#d8d8d8"/><path d="M3 6.5 H10" stroke="#808080" stroke-width=".8"/><rect x="12.5" y="4" width="1.5" height="6" fill="#e0e0e0"/><path d="M2 11.5 Q8 16 14 11.5" stroke="#a0a0a0" fill="none"/></svg>
<div class="t" style="left:378px;top:366px;font-size:13px;letter-spacing:0.586px;">fltrCol</div>
<div class="t" style="left:492px;top:366px;font-size:13px;letter-spacing:0.847px;">Видж...</div>
<div style="left:343px;top:389px;width:12px;height:1px;background:repeating-linear-gradient(90deg,#b0b0b0 0 1px,transparent 1px 2px)"></div>
<svg style="left:356px;top:381px" width="16" height="17" viewBox="0 0 16 17"><path d="M0.5 0.5 V16.5 M15.5 0.5 V16.5" stroke="#b8c8b8" stroke-dasharray="1 1"/><text x="1.5" y="11" font-size="7.5" font-family="Liberation Sans" font-weight="bold" fill="#505050" letter-spacing="-.3">Text</text><path d="M2 15.5 Q8 17 14 15.5" stroke="#c0c0c0" fill="none"/></svg>
<div class="t" style="left:378px;top:382px;font-size:13px;letter-spacing:0.552px;">lab_fltr</div>
<div class="t" style="left:492px;top:382px;font-size:13px;letter-spacing:0.847px;">Видж...</div>
<div style="left:319px;top:400px;width:9px;height:9px;border:1px solid #a8a8a8;box-sizing:border-box;background:#fff"></div>
<div style="left:321px;top:404px;width:5px;height:1px;background:#000"></div>
<div style="left:329px;top:404px;width:6px;height:1px;background:repeating-linear-gradient(90deg,#b0b0b0 0 1px,transparent 1px 2px)"></div>
<svg style="left:337px;top:399px" width="16" height="11"><rect x="0.5" y="0.5" width="15" height="10" fill="#fbfbfb" stroke="#e0e0e0"/><rect x="0.5" y="0.5" width="15" height="2" fill="#d8d8d8"/><path d="M4 1 V3 M8 1 V3 M12 1 V3" stroke="#b0b0b0"/></svg>
<div class="t" style="left:358px;top:397px;font-size:13px;letter-spacing:0.543px;">Рапорт на 2 смены</div>
<div class="t" style="left:492px;top:397px;font-size:13px;letter-spacing:0.847px;">Видж...</div>
<div style="left:343px;top:419px;width:12px;height:1px;background:repeating-linear-gradient(90deg,#b0b0b0 0 1px,transparent 1px 2px)"></div>
<svg style="left:356px;top:411px" width="16" height="17" viewBox="0 0 16 17"><path d="M0.5 0.5 V16.5 M15.5 0.5 V16.5" stroke="#b8c8b8" stroke-dasharray="1 1"/><path d="M3 1.5 L13 1.5 Q14.5 1.5 14.5 3 L14.5 11 Q14.5 15.5 10 15.5 L3 15.5 Q1.5 15.5 1.5 14 L1.5 3 Q1.5 1.5 3 1.5 Z" fill="#a4a4a4" stroke="#7c7c7c"/><rect x="3.5" y="4" width="9" height="2" fill="#e8e8e8"/><rect x="3.5" y="7.5" width="9" height="2" fill="#e8e8d8"/><rect x="3.5" y="11" width="7" height="2" fill="#e0e0e0"/><path d="M6.5 4 V13 M9.5 4 V13" stroke="#a0a0a0" stroke-width=".8"/><path d="M10 15.5 Q14.5 15.5 14.5 11" stroke="#404040" fill="none" stroke-width="1.4"/></svg>
<div class="t" style="left:378px;top:412px;font-size:13px;letter-spacing:0.657px;">doc</div>
<div class="t" style="left:492px;top:412px;font-size:13px;letter-spacing:0.847px;">Видж...</div>
<div style="left:319px;top:430px;width:9px;height:9px;border:1px solid #a8a8a8;box-sizing:border-box;background:#fff"></div>
<div style="left:321px;top:434px;width:5px;height:1px;background:#000"></div>
<div style="left:323px;top:432px;width:1px;height:5px;background:#000"></div>
<div style="left:329px;top:434px;width:6px;height:1px;background:repeating-linear-gradient(90deg,#b0b0b0 0 1px,transparent 1px 2px)"></div>
<svg style="left:337px;top:429px" width="16" height="11"><rect x="0.5" y="0.5" width="15" height="10" fill="#fbfbfb" stroke="#e0e0e0"/><rect x="0.5" y="0.5" width="15" height="2" fill="#d8d8d8"/><path d="M4 1 V3 M8 1 V3 M12 1 V3" stroke="#b0b0b0"/></svg>
<div class="t" style="left:358px;top:427px;font-size:13px;letter-spacing:0.677px;">Журнал вмешате...</div>
<div class="t" style="left:492px;top:427px;font-size:13px;letter-spacing:0.847px;">Видж...</div>
<div style="left:299px;top:444px;width:9px;height:9px;border:1px solid #a8a8a8;box-sizing:border-box;background:#fff"></div>
<div style="left:301px;top:448px;width:5px;height:1px;background:#000"></div>
<div style="left:303px;top:446px;width:1px;height:5px;background:#000"></div>
<div style="left:309px;top:448px;width:5px;height:1px;background:repeating-linear-gradient(90deg,#b0b0b0 0 1px,transparent 1px 2px)"></div>
<div class="t" style="left:316px;top:441px;font-size:13px;letter-spacing:0.520px;">Элементы мнемосхемы</div>
<div class="t" style="left:492px;top:441px;font-size:13px;letter-spacing:0.481px;">Библ...</div>
<div style="left:299px;top:459px;width:9px;height:9px;border:1px solid #a8a8a8;box-sizing:border-box;background:#fff"></div>
<div style="left:301px;top:463px;width:5px;height:1px;background:#000"></div>
<div style="left:303px;top:461px;width:1px;height:5px;background:#000"></div>
<div style="left:309px;top:463px;width:5px;height:1px;background:repeating-linear-gradient(90deg,#b0b0b0 0 1px,transparent 1px 2px)"></div>
<svg style="left:316px;top:455px" width="16" height="16" viewBox="0 0 16 16"><rect x="0.5" y="0.5" width="15" height="15" fill="#90c8d8" stroke="#40a060" stroke-dasharray="2 1"/><path d="M8 2 V14 M2 8 H14 M4 4 L12 12 M12 4 L4 12" stroke="#f0c000" stroke-width="1.6"/><circle cx="8" cy="8" r="2.5" fill="#ffe040"/></svg>
<div class="t" style="left:338px;top:456px;font-size:13px;letter-spacing:0.743px;">Базовые виджеты</div>
<div class="t" style="left:492px;top:456px;font-size:13px;letter-spacing:0.481px;">Библ...</div>
<div style="left:268px;top:476px;width:382px;height:2px;background:#1a1a1a"></div>
<div style="left:268px;top:475px;width:382px;height:1px;background:#d8d8d8"></div>
<div class="t" style="left:293px;top:481px;font-size:13px;letter-spacing:0.887px;">Атрибуты</div>
<svg style="left:643px;top:482px" width="8" height="9"><rect x="0.75" y="3.75" width="5" height="4.5" fill="none" stroke="#000" stroke-width="1.5"/><path d="M2.5 3.5 L2.5 0.75 L7.5 0.75" fill="none" stroke="#000" stroke-width="1.5"/></svg>
<div style="left:271px;top:479px;width:19px;height:87px;background:#f3f3f3"></div>
<div style="left:272px;top:565px;width:18px;height:1px;background:#202020"></div>
<div style="left:271px;top:562px;width:1px;height:3px;background:#202020"></div>
<div style="left:271px;top:566px;width:19px;height:59px;background:#ebebeb"></div>
<div style="left:272px;top:624px;width:18px;height:1px;background:#202020"></div>
<div style="left:271px;top:621px;width:1px;height:3px;background:#202020"></div>
<div class="t" style="left:274px;top:555px;transform-origin:0 0;transform:rotate(-90deg);letter-spacing:0.887px">Атрибуты</div>
<div class="t" style="left:274px;top:615px;transform-origin:0 0;transform:rotate(-90deg);letter-spacing:-0.353px">Связи</div>
<div style="left:292px;top:499px;width:358px;height:347px;background:#fff"></div>
<div style="left:292px;top:499px;width:358px;height:22px;background:#efefef"></div>
<div style="left:292px;top:499px;width:358px;height:1px;background:#101010"></div>
<div style="left:292px;top:521px;width:358px;height:1px;background:#101010"></div>
<div style="left:292px;top:499px;width:1px;height:347px;background:#101010"></div>
<div style="left:392px;top:500px;width:1px;height:21px;background:#101010"></div>
<div class="t" style="left:297px;top:504px;font-size:13px;letter-spacing:1.092px;">Атрибут</div>
<div class="t" style="left:397px;top:504px;font-size:13px;letter-spacing:0.621px;">Значение</div>
<div style="left:293px;top:845px;width:357px;height:1px;background:#e4e4e4"></div>
<div style="left:293px;top:846px;width:357px;height:1px;background:#fafafa"></div>
<div style="left:265px;top:866px;width:385px;height:4px;background:linear-gradient(#8e92aa,#a2acbc 40%,#6e8a7c 75%,#1a3a70)"></div>
<div style="left:650px;top:41px;width:1214px;height:894px;background:#efefef"></div>
<div style="left:650px;top:41px;width:4px;height:894px;background:linear-gradient(90deg,#2a5a98,#4a8ad8 50%,#3d7fcf)"></div>
<div style="left:650px;top:41px;width:1214px;height:1px;background:#1f4680"></div>
<div style="left:651px;top:42px;width:1213px;height:23px;background:linear-gradient(#5b9be0,#4288d4 20%,#3a7ec8 55%,#3f8ad8 85%,#4a94e2)"></div>
<svg style="left:657px;top:46px" width="16" height="16" viewBox="0 0 16 16"><rect x="0.5" y="0.5" width="13" height="13" fill="#a8c8e8" stroke="#1e3e78"/><rect x="2" y="2" width="7" height="4" fill="#102818"/><path d="M3 8 L8 6 L15 14" stroke="#607060" stroke-width="2.5" fill="none"/></svg>
<div class="t" style="left:682px;top:49px;font-size:14px;letter-spacing:0.909px;color:#1a3050;font-weight:bold;opacity:.6;">Ссылка на виджет &#x27;doc&#x27;.</div>
<div class="t" style="left:681px;top:48px;font-size:14px;letter-spacing:0.909px;color:#f4f8ff;font-weight:bold;">Ссылка на виджет &#x27;doc&#x27;.</div>
<div style="left:1810px;top:46px;width:18px;height:17px;border:1px solid #3674bc;border-radius:3px;box-sizing:border-box;background:linear-gradient(#6aa6e6,#5a98dc)"></div>
<div style="left:1830px;top:46px;width:18px;height:17px;border:1px solid #3674bc;border-radius:3px;box-sizing:border-box;background:linear-gradient(#6aa6e6,#5a98dc)"></div>
<div style="left:1850px;top:46px;width:18px;height:17px;border:1px solid #3674bc;border-radius:3px;box-sizing:border-box;background:linear-gradient(#6aa6e6,#5a98dc)"></div>
<div class="t" style="left:1814px;top:48px;font-size:14px;letter-spacing:-1.243px;color:#fff;font-weight:bold;">?</div>
<div style="left:1835px;top:51px;width:9px;height:8px;border:2px solid #fff;border-top-width:2px;box-sizing:border-box"></div>
<svg style="left:1853px;top:50px" width="12" height="10"><path d="M1 1 L10 9 M10 1 L1 9" stroke="#fff" stroke-width="2.2"/></svg>
<div style="left:654px;top:65px;width:1210px;height:1px;background:#f6f6f6"></div>
<div style="left:662px;top:74px;width:74px;height:17px;background:#f2f2f2;border-top:1px solid #fafafa"></div>
<div class="t" style="left:671px;top:76px;font-size:13px;letter-spacing:1.406px;">Виджет</div>
<div style="left:736px;top:72px;width:88px;height:20px;background:#efefef;border-top:1px solid #fdfdfd"></div>
<div class="t" style="left:748px;top:75px;font-size:13px;letter-spacing:0.887px;">Атрибуты</div>
<div style="left:824px;top:72px;width:2px;height:20px;background:#181818"></div>
<div class="t" style="left:837px;top:76px;font-size:13px;letter-spacing:0.929px;color:#8a8a8a;">Обработка</div>
<div style="left:921px;top:74px;width:2px;height:17px;background:#181818"></div>
<div class="t" style="left:934px;top:76px;font-size:13px;letter-spacing:0.147px;color:#8a8a8a;">Связи</div>
<div style="left:980px;top:74px;width:2px;height:17px;background:#181818"></div>
<div style="left:662px;top:91px;width:1201px;height:1px;background:#fdfdfd"></div>
<div style="left:1859px;top:91px;width:1px;height:820px;background:#fafafa"></div>
<div style="left:1862px;top:91px;width:2px;height:820px;background:#e6e6e6"></div>
<div style="left:659px;top:911px;width:1205px;height:1px;background:#101010"></div>
<div style="left:659px;top:91px;width:1px;height:820px;background:#fbfbfb"></div>
<div style="left:654px;top:912px;width:1210px;height:23px;background:#efefef"></div>
<div style="left:671px;top:103px;width:1181px;height:797px;background:#fff"></div>
<div style="left:671px;top:103px;width:1181px;height:22px;background:#efefef"></div>
<div style="left:671px;top:103px;width:1181px;height:1px;background:#101010"></div>
<div style="left:671px;top:125px;width:1181px;height:1px;background:#101010"></div>
<div style="left:671px;top:103px;width:1px;height:797px;background:#101010"></div>
<div style="left:1851px;top:103px;width:1px;height:23px;background:#101010"></div>
<div style="left:810px;top:104px;width:1px;height:21px;background:#101010"></div>
<div style="left:672px;top:899px;width:1180px;height:1px;background:#ececec"></div>
<div style="left:1852px;top:126px;width:1px;height:774px;background:#f2f2f2"></div>
<div class="t" style="left:676px;top:108px;font-size:13px;letter-spacing:1.092px;">Атрибут</div>
<div class="t" style="left:816px;top:108px;font-size:13px;letter-spacing:0.621px;">Значение</div>
<div style="left:672px;top:140px;width:1180px;height:14px;background:#f6f6f6"></div>
<div style="left:672px;top:168px;width:1180px;height:14px;background:#f6f6f6"></div>
<div style="left:672px;top:196px;width:1180px;height:14px;background:#f6f6f6"></div>
<div style="left:672px;top:224px;width:1180px;height:50px;background:#f6f6f6"></div>
<div style="left:672px;top:288px;width:1180px;height:14px;background:#f6f6f6"></div>
<div style="left:672px;top:316px;width:1180px;height:14px;background:#f6f6f6"></div>
<div style="left:672px;top:380px;width:1180px;height:50px;background:#f6f6f6"></div>
<div style="left:672px;top:480px;width:1180px;height:149px;background:#f6f6f6"></div>
<div style="left:672px;top:679px;width:1180px;height:25px;background:#f6f6f6"></div>
<div style="left:672px;top:718px;width:1180px;height:14px;background:#f6f6f6"></div>
<div style="left:672px;top:746px;width:1180px;height:14px;background:#f6f6f6"></div>
<div style="left:682px;top:126px;width:1px;height:647px;background:repeating-linear-gradient(#b4b4b4 0 1px,transparent 1px 2px)"></div>
<div style="left:684px;top:133px;width:8px;height:1px;background:repeating-linear-gradient(90deg,#b4b4b4 0 1px,transparent 1px 2px)"></div>
<div class="t" style="left:695px;top:126px;font-size:13px;letter-spacing:1.275px;">Идентификатор</div>
<div class="t" style="left:814px;top:126px;font-size:13px;letter-spacing:0.657px;">doc</div>
<div style="left:684px;top:147px;width:8px;height:1px;background:repeating-linear-gradient(90deg,#b4b4b4 0 1px,transparent 1px 2px)"></div>
<div class="t" style="left:695px;top:140px;font-size:13px;letter-spacing:1.143px;">Путь</div>
<div class="t" style="left:814px;top:140px;font-size:13px;letter-spacing:0.248px;">/wlb_doc/wdg_docGasNodeMgn/wdg_doc</div>
<div style="left:684px;top:161px;width:8px;height:1px;background:repeating-linear-gradient(90deg,#b4b4b4 0 1px,transparent 1px 2px)"></div>
<div class="t" style="left:695px;top:154px;font-size:13px;letter-spacing:1.020px;">Родитель</div>
<div class="t" style="left:814px;top:154px;font-size:13px;letter-spacing:0.226px;">/wlb_doc/wdg_docDin/wdg_doc</div>
<div style="left:684px;top:175px;width:8px;height:1px;background:repeating-linear-gradient(90deg,#b4b4b4 0 1px,transparent 1px 2px)"></div>
<div class="t" style="left:695px;top:168px;font-size:13px;letter-spacing:0.552px;">Владелец</div>
<div class="t" style="left:814px;top:168px;font-size:13px;letter-spacing:0.331px;">root:UI</div>
<div style="left:684px;top:189px;width:8px;height:1px;background:repeating-linear-gradient(90deg,#b4b4b4 0 1px,transparent 1px 2px)"></div>
<div class="t" style="left:695px;top:182px;font-size:13px;letter-spacing:1.136px;color:#2020b8;">Доступ</div>
<div class="t" style="left:814px;top:182px;font-size:13px;letter-spacing:-1.654px;">RWRWRW</div>
<div style="left:684px;top:203px;width:8px;height:1px;background:repeating-linear-gradient(90deg,#b4b4b4 0 1px,transparent 1px 2px)"></div>
<div class="t" style="left:695px;top:196px;font-size:13px;letter-spacing:1.357px;">Корень</div>
<div class="t" style="left:814px;top:196px;font-size:13px;letter-spacing:0.536px;">Document</div>
<div style="left:684px;top:217px;width:8px;height:1px;background:repeating-linear-gradient(90deg,#b4b4b4 0 1px,transparent 1px 2px)"></div>
<div class="t" style="left:695px;top:210px;font-size:13px;letter-spacing:-0.660px;">Имя</div>
<div style="left:684px;top:249px;width:8px;height:1px;background:repeating-linear-gradient(90deg,#b4b4b4 0 1px,transparent 1px 2px)"></div>
<div class="t" style="left:695px;top:242px;font-size:13px;letter-spacing:0.455px;">Описание</div>
<div style="left:684px;top:281px;width:8px;height:1px;background:repeating-linear-gradient(90deg,#b4b4b4 0 1px,transparent 1px 2px)"></div>
<div class="t" style="left:695px;top:274px;font-size:13px;letter-spacing:0.210px;">Включен</div>
<div class="t" style="left:814px;top:274px;font-size:13px;letter-spacing:1.016px;">true</div>
<div style="left:684px;top:295px;width:8px;height:1px;background:repeating-linear-gradient(90deg,#b4b4b4 0 1px,transparent 1px 2px)"></div>
<div class="t" style="left:695px;top:288px;font-size:13px;letter-spacing:0.798px;">Активный</div>
<div class="t" style="left:814px;top:288px;font-size:13px;letter-spacing:1.016px;">true</div>
<div style="left:678px;top:305px;width:9px;height:9px;border:1px solid #a8a8a8;box-sizing:border-box;background:#fff"></div>
<div style="left:680px;top:309px;width:5px;height:1px;background:#000"></div>
<div style="left:682px;top:307px;width:1px;height:5px;background:#000"></div>
<div style="left:688px;top:309px;width:4px;height:1px;background:repeating-linear-gradient(90deg,#b4b4b4 0 1px,transparent 1px 2px)"></div>
<div class="t" style="left:695px;top:302px;font-size:13px;letter-spacing:1.018px;">Геометрия</div>
<div class="t" style="left:814px;top:302px;font-size:13px;letter-spacing:0.555px;">[3, 3, 893, 593, 1, 1, 0, 0]</div>
<div style="left:678px;top:319px;width:9px;height:9px;border:1px solid #a8a8a8;box-sizing:border-box;background:#fff"></div>
<div style="left:680px;top:323px;width:5px;height:1px;background:#000"></div>
<div style="left:682px;top:321px;width:1px;height:5px;background:#000"></div>
<div style="left:688px;top:323px;width:4px;height:1px;background:repeating-linear-gradient(90deg,#b4b4b4 0 1px,transparent 1px 2px)"></div>
<div class="t" style="left:695px;top:316px;font-size:13px;letter-spacing:0.358px;">Помощь</div>
<div class="t" style="left:814px;top:316px;font-size:13px;letter-spacing:1.038px;">[, ]</div>
<div style="left:684px;top:355px;width:8px;height:1px;background:repeating-linear-gradient(90deg,#b4b4b4 0 1px,transparent 1px 2px)"></div>
<div class="t" style="left:695px;top:348px;font-size:13px;letter-spacing:0.755px;">Контекстное ...</div>
<div style="left:684px;top:405px;width:8px;height:1px;background:repeating-linear-gradient(90deg,#b4b4b4 0 1px,transparent 1px 2px)"></div>
<div class="t" style="left:695px;top:398px;font-size:13px;letter-spacing:0.460px;">Обработка соб...</div>
<div style="left:684px;top:455px;width:8px;height:1px;background:repeating-linear-gradient(90deg,#b4b4b4 0 1px,transparent 1px 2px)"></div>
<div class="t" style="left:695px;top:448px;font-size:13px;letter-spacing:-1.165px;color:#2020b8;">CSS</div>
<div style="left:684px;top:554px;width:8px;height:1px;background:repeating-linear-gradient(90deg,#b4b4b4 0 1px,transparent 1px 2px)"></div>
<div style="left:692px;top:480px;width:119px;height:149px;background:#678db8"></div>
<div class="t" style="left:695px;top:548px;font-size:13px;letter-spacing:0.796px;color:#fff;">Шаблон</div>
<div style="left:684px;top:654px;width:8px;height:1px;background:repeating-linear-gradient(90deg,#b4b4b4 0 1px,transparent 1px 2px)"></div>
<div class="t" style="left:695px;top:647px;font-size:13px;letter-spacing:0.964px;">Документ</div>
<div style="left:684px;top:691px;width:8px;height:1px;background:repeating-linear-gradient(90deg,#b4b4b4 0 1px,transparent 1px 2px)"></div>
<div class="t" style="left:695px;top:684px;font-size:13px;letter-spacing:1.061px;">Шрифт</div>
<div style="left:678px;top:707px;width:9px;height:9px;border:1px solid #a8a8a8;box-sizing:border-box;background:#fff"></div>
<div style="left:680px;top:711px;width:5px;height:1px;background:#000"></div>
<div style="left:682px;top:709px;width:1px;height:5px;background:#000"></div>
<div style="left:688px;top:711px;width:4px;height:1px;background:repeating-linear-gradient(90deg,#b4b4b4 0 1px,transparent 1px 2px)"></div>
<div class="t" style="left:695px;top:704px;font-size:13px;letter-spacing:0.428px;">Время</div>
<div class="t" style="left:814px;top:704px;font-size:13px;letter-spacing:0.886px;">[0, 0]</div>
<div style="left:684px;top:725px;width:8px;height:1px;background:repeating-linear-gradient(90deg,#b4b4b4 0 1px,transparent 1px 2px)"></div>
<div class="t" style="left:695px;top:718px;font-size:13px;letter-spacing:0.534px;">В процессе</div>
<div class="t" style="left:814px;top:718px;font-size:13px;letter-spacing:0.509px;">false</div>
<div style="left:684px;top:739px;width:8px;height:1px;background:repeating-linear-gradient(90deg,#b4b4b4 0 1px,transparent 1px 2px)"></div>
<div class="t" style="left:695px;top:732px;font-size:13px;letter-spacing:0.490px;">Размер архива</div>
<div class="t" style="left:814px;top:732px;font-size:13px;letter-spacing:0.659px;">0</div>
<div style="left:678px;top:749px;width:9px;height:9px;border:1px solid #a8a8a8;box-sizing:border-box;background:#fff"></div>
<div style="left:680px;top:753px;width:5px;height:1px;background:#000"></div>
<div style="left:682px;top:751px;width:1px;height:5px;background:#000"></div>
<div style="left:688px;top:753px;width:4px;height:1px;background:repeating-linear-gradient(90deg,#b4b4b4 0 1px,transparent 1px 2px)"></div>
<div class="t" style="left:695px;top:746px;font-size:13px;letter-spacing:0.659px;">Узел</div>
<div class="t" style="left:814px;top:746px;font-size:13px;letter-spacing:0.322px;">[&lt;EVAL&gt;, &lt;EVAL&gt;, &lt;EVAL&gt;, &lt;EVAL&gt;, &lt;EVAL&gt;]</div>
<div style="left:678px;top:763px;width:9px;height:9px;border:1px solid #a8a8a8;box-sizing:border-box;background:#fff"></div>
<div style="left:680px;top:767px;width:5px;height:1px;background:#000"></div>
<div style="left:682px;top:765px;width:1px;height:5px;background:#000"></div>
<div style="left:688px;top:767px;width:4px;height:1px;background:repeating-linear-gradient(90deg,#b4b4b4 0 1px,transparent 1px 2px)"></div>
<div class="t" style="left:695px;top:760px;font-size:13px;letter-spacing:0.596px;">Узол</div>
<div class="t" style="left:814px;top:760px;font-size:13px;letter-spacing:2.453px;">[]</div>
<div class="t" style="left:814px;top:434px;font-size:13px;letter-spacing:0.505px;">TABLE.data { border-collapse: collapse; }</div>
<div class="t" style="left:814px;top:448px;font-size:13px;letter-spacing:0.521px;">TABLE.data TH { background-color: #e6e6e6; border: 1px solid black; }</div>
<div class="t" style="left:814px;top:462px;font-size:13px;letter-spacing:0.444px;">TABLE.data TD { white-space: nowrap; border: 1px solid black;}</div>
<div style="left:814px;top:680px;width:24px;height:24px;border:1px solid #101010;box-sizing:border-box;background:#fbfbfb"></div>
<div class="t" style="left:818px;top:685px;font-size:12px;letter-spacing:-0.678px;">Aa</div>
<div class="t" style="left:844px;top:685px;font-size:13px;letter-spacing:0.269px;">Arial 11</div>
<div style="left:811px;top:480px;width:1039px;height:149px;background:#fff;overflow:hidden">
<div style="position:absolute;left:0;top:0;width:1039px;height:1px;background:#000"></div>
<div style="position:absolute;left:1px;top:0;width:1px;height:149px;background:#000"></div>
<div style="position:absolute;left:1px;top:148px;width:1039px;height:1px;background:#e8e8e8"></div>
<div class="t" style="left:7px;top:-6px;letter-spacing:0.598px"><span style="color:#000;font-weight:bold;">&lt;TABLE</span><span style="color:#000;"> </span><span style="color:#2a2ab8;">border</span><span style="color:#000;">=</span><span style="color:#2a7a2a;">&quot;1&quot;</span><span style="color:#000;"> </span><span style="color:#2a2ab8;">cellpadding</span><span style="color:#000;">=</span><span style="color:#2a7a2a;">&quot;2&quot;</span><span style="color:#000;"> </span><span style="color:#2a2ab8;">cellspacing</span><span style="color:#000;">=</span><span style="color:#2a7a2a;">&quot;0&quot;</span><span style="color:#000;"> </span><span style="color:#2a2ab8;">width</span><span style="color:#000;">=</span><span style="color:#2a7a2a;">&quot;100%&quot;</span><span style="color:#000;"> </span><span style="color:#2a2ab8;">class</span><span style="color:#000;">=</span><span style="color:#2a7a2a;">&quot;data&quot;</span><span style="color:#000;"> </span><span style="color:#2a2ab8;">export</span><span style="color:#000;">=</span><span style="color:#2a7a2a;">&quot;1&quot;</span><span style="color:#000;font-weight:bold;"> &gt;</span></div>
<div class="t" style="left:15px;top:8px;letter-spacing:0.566px"><span style="color:#000;font-weight:bold;">&lt;TR</span><span style="color:#000;"> </span><span style="color:#2a2ab8;">align</span><span style="color:#000;">=</span><span style="color:#2a7a2a;">&quot;left&quot;</span><span style="color:#000;"> </span><span style="color:#2a2ab8;">valign</span><span style="color:#000;">=</span><span style="color:#2a7a2a;">&quot;center&quot;</span><span style="color:#000;font-weight:bold;">&gt;&lt;TH</span><span style="color:#000;"> </span><span style="color:#2a2ab8;">colspan</span><span style="color:#000;">=</span><span style="color:#2a7a2a;">&quot;7&quot;</span><span style="color:#000;font-weight:bold;">&gt;</span><span style="color:#000;">Накопленые значения по выч. # тр-пров # за: DD MM YYYY</span><span style="color:#7a7a7a;">&lt;?dp</span><span style="color:#000;"> </span><span style="color:#10106a;font-weight:bold;">return</span><span style="color:#000;"> </span><span style="color:#2a7a2a;">&quot;Накопленые значения по выч. # т</span></div>
<div class="t" style="left:15px;top:22px;letter-spacing:0.987px"><span style="color:#000;font-weight:bold;">&lt;TR&gt;&lt;TH&gt;</span><span style="color:#000;">Дата</span><span style="color:#000;font-weight:bold;">&lt;/TH&gt;&lt;TH&gt;</span><span style="color:#000;">Время</span><span style="color:#000;font-weight:bold;">&lt;/TH&gt;&lt;TH&gt;</span><span style="color:#000;">Расход</span><span style="color:#000;font-weight:bold;">&lt;/TH&gt;&lt;TH&gt;</span><span style="color:#000;">Объём</span><span style="color:#000;font-weight:bold;">&lt;/TH&gt;&lt;TH&gt;</span><span style="color:#000;">давл.</span><span style="color:#000;font-weight:bold;">&lt;/TH&gt;&lt;TH&gt;</span><span style="color:#000;">Температура</span><span style="color:#000;font-weight:bold;">&lt;/TH&gt;&lt;TH&gt;</span><span style="color:#000;">Перепад</span><span style="color:#000;font-weight:bold;">&lt;/TH&gt;&lt;/TR&gt;</span></div>
<div class="t" style="left:15px;top:36px;letter-spacing:0.953px"><span style="color:#000;font-weight:bold;">&lt;TR&gt;&lt;TH</span><span style="color:#000;"> </span><span style="color:#2a2ab8;">colspan</span><span style="color:#000;">=</span><span style="color:#2a7a2a;">&quot;2&quot;</span><span style="color:#000;font-weight:bold;">&gt;</span><span style="color:#c08a30;">&amp;nbsp;</span><span style="color:#000;font-weight:bold;">&lt;/TH&gt;&lt;TH&gt;</span><span style="color:#000;">м3/ч</span><span style="color:#000;font-weight:bold;">&lt;/TH&gt;&lt;TH&gt;</span><span style="color:#000;">м3</span><span style="color:#000;font-weight:bold;">&lt;/TH&gt;&lt;TH&gt;</span><span style="color:#000;">кГс/см2</span><span style="color:#000;font-weight:bold;">&lt;/TH&gt;&lt;TH&gt;</span><span style="color:#000;">град.С</span><span style="color:#000;font-weight:bold;">&lt;/TH&gt;&lt;TH&gt;</span><span style="color:#000;">кГс/см2</span><span style="color:#000;font-weight:bold;">&lt;/TH&gt;&lt;/TR&gt;</span></div>
<div class="t" style="left:15px;top:50px;letter-spacing:0.612px"><span style="color:#000;font-weight:bold;">&lt;TR</span><span style="color:#000;"> </span><span style="color:#2a2ab8;">docRept</span><span style="color:#000;">=</span><span style="color:#2a7a2a;">&quot;1&quot;</span><span style="color:#000;"> </span><span style="color:#000;font-weight:bold;">&gt;</span></div>
<div class="t" style="left:47px;top:64px;letter-spacing:0.403px"><span style="color:#7a7a7a;">&lt;?dp</span><span style="color:#000;"> </span><span style="color:#10106a;font-weight:bold;">return</span><span style="color:#000;"> </span><span style="color:#2a7a2a;">&quot;&lt;TD&gt;&quot;</span><span style="color:#10106a;">+</span><span style="color:#7a7a7a;">Special.FLibSYS.tmFStr</span><span style="color:#2a2ab8;">(</span><span style="color:#7a7a7a;">rTime</span><span style="color:#7a7a7a;">,</span><span style="color:#2a7a2a;">&quot;%d %m %Y&quot;</span><span style="color:#2a2ab8;">)</span><span style="color:#10106a;">+</span><span style="color:#2a7a2a;">&quot;&lt;/TD&gt;&quot;</span><span style="color:#10106a;">+</span></div>
<div style="position:absolute;left:121px;top:78px;width:123px;height:14px;background:#678db8"></div>
<div style="position:absolute;left:244px;top:77px;width:1px;height:15px;background:#000"></div>
<div class="t" style="left:86px;top:78px;letter-spacing:0.232px"><span style="color:#2a7a2a;">&quot;&lt;TD </span><span style="color:#fff;">BGCOLOR=\&quot;red\&quot;&gt;&quot;</span><span style="color:#10106a;">+</span><span style="color:#7a7a7a;">Special.FLibSYS.tmFStr</span><span style="color:#2a2ab8;">(</span><span style="color:#7a7a7a;">rTime</span><span style="color:#7a7a7a;">,</span><span style="color:#2a7a2a;">&quot;%H:%M:%S&quot;</span><span style="color:#2a2ab8;">)</span><span style="color:#10106a;">+</span><span style="color:#2a7a2a;">&quot;&lt;/TD&gt;&quot;</span><span style="color:#10106a;">+</span></div>
<div class="t" style="left:86px;top:92px;letter-spacing:0.397px"><span style="color:#2a7a2a;">&quot;&lt;TD&gt;&quot;</span><span style="color:#10106a;">+</span><span style="color:#7a7a7a;">DAQ.JavaLikeCalc.lib_doc.getVal</span><span style="color:#2a2ab8;">(</span><span style="color:#7a7a7a;">pF</span><span style="color:#7a7a7a;">,</span><span style="color:#7a7a7a;">rTime</span><span style="color:#7a7a7a;">,</span><span style="color:#d89a10;">0</span><span style="color:#7a7a7a;">,</span><span style="color:#d89a10;">2</span><span style="color:#7a7a7a;">,</span><span style="color:#2a7a2a;">&quot;&quot;</span><span style="color:#7a7a7a;">,</span><span style="color:#d89a10;">true</span><span style="color:#2a2ab8;">)</span><span style="color:#10106a;">+</span><span style="color:#2a7a2a;">&quot;&lt;/TD&gt;&quot;</span><span style="color:#10106a;">+</span></div>
<div class="t" style="left:86px;top:106px;letter-spacing:0.365px"><span style="color:#2a7a2a;">&quot;&lt;TD&gt;&quot;</span><span style="color:#10106a;">+</span><span style="color:#7a7a7a;">DAQ.JavaLikeCalc.lib_doc.getVal</span><span style="color:#2a2ab8;">(</span><span style="color:#7a7a7a;">pQ</span><span style="color:#7a7a7a;">,</span><span style="color:#7a7a7a;">rTime</span><span style="color:#7a7a7a;">,</span><span style="color:#d89a10;">0</span><span style="color:#7a7a7a;">,</span><span style="color:#d89a10;">3</span><span style="color:#7a7a7a;">,</span><span style="color:#2a7a2a;">&quot;&quot;</span><span style="color:#7a7a7a;">,</span><span style="color:#d89a10;">true</span><span style="color:#2a2ab8;">)</span><span style="color:#10106a;">+</span><span style="color:#2a7a2a;">&quot;&lt;/TD&gt;&quot;</span><span style="color:#10106a;">+</span></div>
<div class="t" style="left:86px;top:120px;letter-spacing:0.386px"><span style="color:#2a7a2a;">&quot;&lt;TD&gt;&quot;</span><span style="color:#10106a;">+</span><span style="color:#7a7a7a;">DAQ.JavaLikeCalc.lib_doc.getVal</span><span style="color:#2a2ab8;">(</span><span style="color:#7a7a7a;">pP</span><span style="color:#7a7a7a;">,</span><span style="color:#7a7a7a;">rTime</span><span style="color:#7a7a7a;">,</span><span style="color:#d89a10;">0</span><span style="color:#7a7a7a;">,</span><span style="color:#d89a10;">3</span><span style="color:#7a7a7a;">,</span><span style="color:#2a7a2a;">&quot;&quot;</span><span style="color:#7a7a7a;">,</span><span style="color:#d89a10;">true</span><span style="color:#2a2ab8;">)</span><span style="color:#10106a;">+</span><span style="color:#2a7a2a;">&quot;&lt;/TD&gt;&quot;</span><span style="color:#10106a;">+</span></div>
<div class="t" style="left:86px;top:134px;letter-spacing:0.397px"><span style="color:#2a7a2a;">&quot;&lt;TD&gt;&quot;</span><span style="color:#10106a;">+</span><span style="color:#7a7a7a;">DAQ.JavaLikeCalc.lib_doc.getVal</span><span style="color:#2a2ab8;">(</span><span style="color:#7a7a7a;">pT</span><span style="color:#7a7a7a;">,</span><span style="color:#7a7a7a;">rTime</span><span style="color:#7a7a7a;">,</span><span style="color:#d89a10;">0</span><span style="color:#7a7a7a;">,</span><span style="color:#d89a10;">3</span><span style="color:#7a7a7a;">,</span><span style="color:#2a7a2a;">&quot;&quot;</span><span style="color:#7a7a7a;">,</span><span style="color:#d89a10;">true</span><span style="color:#2a2ab8;">)</span><span style="color:#10106a;">+</span><span style="color:#2a7a2a;">&quot;&lt;/TD&gt;&quot;</span><span style="color:#10106a;">+</span></div>
</div>
<div style="left:1790px;top:919px;width:73px;height:16px;background:#f2f2f2;border-top:1px solid #fafafa;border-left:1px solid #fafafa"></div>
<div style="left:1863px;top:919px;width:1px;height:16px;background:#101010"></div>
<div class="t" style="left:1798px;top:924px;font-size:13px;letter-spacing:0.821px;">Закрыть</div>
</body></html>
